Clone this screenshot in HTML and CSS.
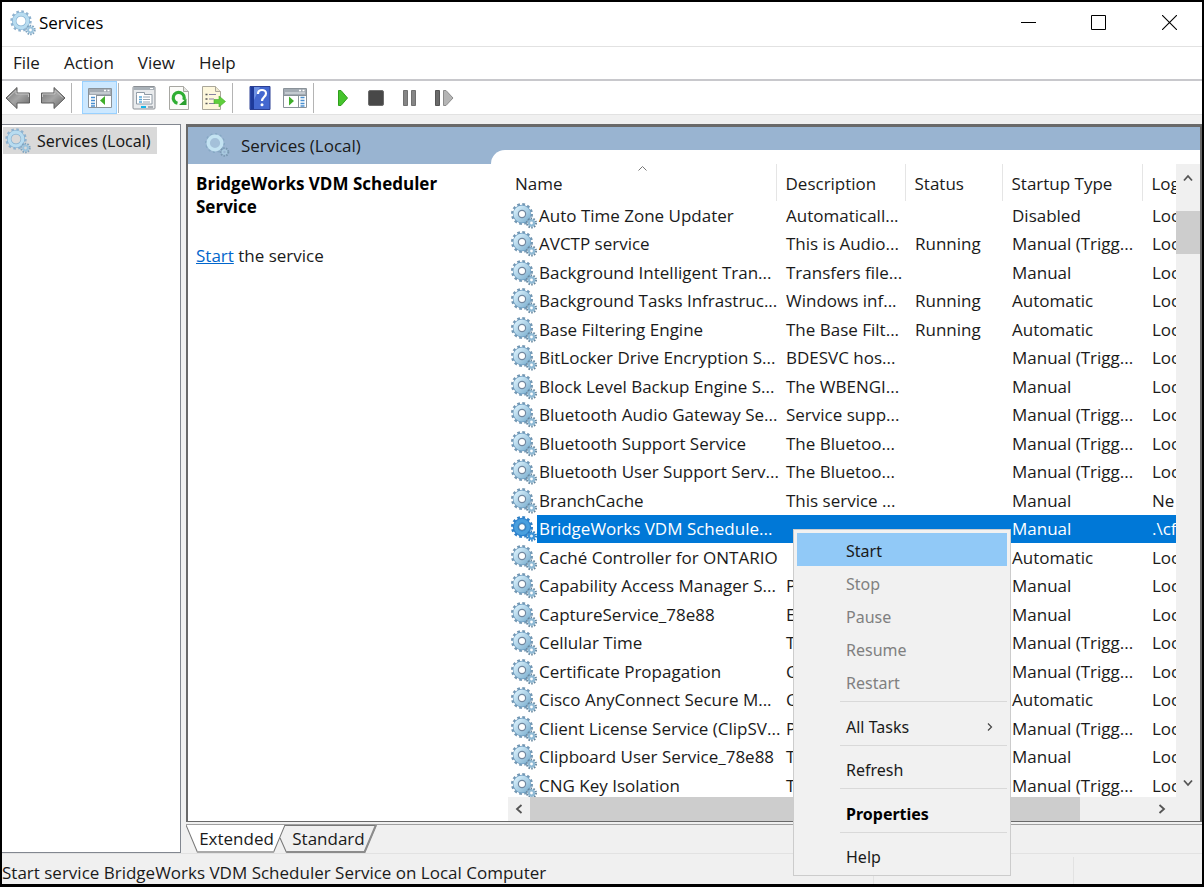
FILE: index.html
```html
<!DOCTYPE html>
<html lang="en">
<head>
    <meta charset="UTF-8">
    <meta name="viewport" content="width=device-width, initial-scale=1.0">
    <title>Services</title>
    <link rel="stylesheet" href="styles.css">
</head>
<body>
    <!-- Shared icons -->
    <svg class="sprite" aria-hidden="true">
        <defs>
            <linearGradient id="steel" x1="0" y1="0" x2="1" y2="1">
                <stop offset="0" stop-color="#d6eefa"/>
                <stop offset="1" stop-color="#86b6d4"/>
            </linearGradient>
            <linearGradient id="grey" x1="0" y1="0" x2="1" y2="1">
                <stop offset="0" stop-color="#707070"/>
                <stop offset="0.5" stop-color="#a5a5a5"/>
                <stop offset="1" stop-color="#666"/>
            </linearGradient>
        </defs>
        <symbol id="gear" viewBox="0 0 26 26">
            <circle cx="11" cy="11" r="9.3" fill="none" stroke="#7397b3" stroke-width="3.4" stroke-dasharray="2.6 2.27"/>
            <circle cx="11" cy="11" r="6.2" fill="none" stroke="#6d9cc0" stroke-width="6"/>
            <circle cx="11" cy="11" r="6.2" fill="none" stroke="url(#steel)" stroke-width="4.8"/>
            <circle cx="11" cy="11" r="3.6" fill="#fff" stroke="#7288a0" stroke-width="1.2"/>
            <circle cx="20.5" cy="20" r="4.4" fill="none" stroke="#65869e" stroke-width="2.2" stroke-dasharray="1.5 1.26"/>
            <circle cx="20.5" cy="20" r="2.6" fill="#fff" stroke="#8fb9d4" stroke-width="2.4"/>
        </symbol>
        <symbol id="gear-soft" viewBox="0 0 26 26">
            <circle cx="11" cy="11" r="9.3" fill="none" stroke="#8fb2cf" stroke-width="2.8" stroke-dasharray="2.5 2.37"/>
            <circle cx="11" cy="11" r="6.8" fill="none" stroke="#7fadd0" stroke-width="4.4"/>
            <circle cx="11" cy="11" r="6.8" fill="none" stroke="#b8dcf0" stroke-width="3.2"/>
            <circle cx="20.5" cy="20" r="4.2" fill="none" stroke="#7ea3bf" stroke-width="2" stroke-dasharray="1.5 1.14"/>
            <circle cx="20.5" cy="20" r="2.4" fill="none" stroke="#9cc4dd" stroke-width="2"/>
        </symbol>
        <symbol id="gear-banner" viewBox="0 0 26 26">
            <circle cx="10" cy="10" r="9" fill="none" stroke="#86a8c4" stroke-width="2" stroke-dasharray="2 2.7"/>
            <circle cx="10" cy="10" r="6.8" fill="#a4c0d9" stroke="#c3e3f2" stroke-width="3.4"/>
            <circle cx="19.5" cy="19" r="3.8" fill="none" stroke="#7898b0" stroke-width="2" stroke-dasharray="1.4 1.3"/>
            <circle cx="19.5" cy="19" r="2" fill="none" stroke="#a8cadf" stroke-width="1.6"/>
        </symbol>
        <symbol id="gear-selected" viewBox="0 0 26 26">
            <circle cx="11" cy="11" r="9.3" fill="none" stroke="#2f7fc4" stroke-width="3.4" stroke-dasharray="2.6 2.27"/>
            <circle cx="11" cy="11" r="6.2" fill="none" stroke="#2c82cf" stroke-width="6"/>
            <circle cx="11" cy="11" r="6.2" fill="none" stroke="#4a9fdd" stroke-width="3.6"/>
            <circle cx="11" cy="11" r="3.4" fill="#fff" stroke="#2a6ea8" stroke-width="1"/>
            <circle cx="20.5" cy="20" r="4.4" fill="none" stroke="#2a78ba" stroke-width="2.2" stroke-dasharray="1.5 1.26"/>
            <circle cx="20.5" cy="20" r="2.6" fill="#e4f2fc" stroke="#3b93d8" stroke-width="2.2"/>
        </symbol>
    </svg>

    <div class="window">
        <header class="title-bar">
            <svg class="gear"><use href="#gear-soft"/></svg>
            <h1>Services</h1>
            <div class="window-buttons">
                <button type="button" aria-label="Minimize"><svg width="15" height="15" viewBox="0 0 15 15"><path d="M0 7.5h15" stroke="#000"/></svg></button>
                <button type="button" aria-label="Maximize"><svg width="15" height="15" viewBox="0 0 15 15"><path d="M.5.5h14v14h-14z" fill="none" stroke="#000"/></svg></button>
                <button type="button" aria-label="Close"><svg width="15" height="15" viewBox="0 0 15 15"><path d="M0 0l15 15M15 0L0 15" stroke="#000" stroke-width="1.1"/></svg></button>
            </div>
        </header>

        <nav class="menu-bar">
            <button type="button">File</button>
            <button type="button">Action</button>
            <button type="button">View</button>
            <button type="button">Help</button>
        </nav>

        <div class="toolbar">
            <button type="button" aria-label="Back">
                <svg width="26" height="24" viewBox="0 0 26 24"><path d="M1 12L12 1.5V7h12.500v10H12v5.500z" fill="url(#grey)" stroke="#5c5c5c"/><path d="M3 12l8-7.500V8h12.500v3" fill="none" stroke="#c4c4c4"/></svg>
            </button>
            <button type="button" aria-label="Forward">
                <svg width="26" height="24" viewBox="0 0 26 24"><path d="M25 12L14 1.500V7H1.500v10H14v5.500z" fill="url(#grey)" stroke="#5c5c5c"/><path d="M2.500 11V8H15V4.500l7.500 7" fill="none" stroke="#c4c4c4"/></svg>
            </button>
            <span class="divider"></span>
            <button type="button" class="active" aria-label="Show or hide console tree">
                <svg width="24" height="20" viewBox="0 0 24 20"><path d="M.5.5h23v19H.5z" fill="#fff" stroke="#8a9299"/><path d="M1 1h22v6H1z" fill="#a3abb3"/><path d="M2 5h20" stroke="#e6eaee"/><path d="M16 2.500h2M19.500 2.500h2" stroke="#fff" stroke-width="1.500"/><path d="M8.500 7v12" stroke="#8a9299"/><path d="M3 9.500h4M3 12.500h4M3 15.500h4M3 18h4" stroke="#4a8fd0" stroke-width="1.400"/><path d="M17 8v9l-5-4.500z" fill="#3fae2a"/><path d="M9 7.500h14" stroke="#8a9299"/></svg>
            </button>
            <span class="divider"></span>
            <button type="button" aria-label="Properties">
                <svg width="24" height="24" viewBox="0 0 24 24"><rect x="1" y=".5" width="22" height="22.500" rx="1" fill="#e9ebed" stroke="#8b8f94"/><path d="M1.500 1h21v3h-21z" fill="#a9b1b8"/><path d="M18 2.500h3" stroke="#fff"/><path d="M4.500 8.500V6.500h8v2h7.500v9.500h-15.500z" fill="#fff" stroke="#8f9aa5"/><path d="M7 11h3M7 13.500h3M7 16h3" stroke="#58a6d8" stroke-width="1.500"/><path d="M11 11h7M11 13.500h7M11 16h7" stroke="#9aa6b2" stroke-width="1.200"/><path d="M9 21h5" stroke="#16b4e8" stroke-width="2"/><path d="M16 21h5" stroke="#a8adb2" stroke-width="2"/></svg>
            </button>
            <button type="button" aria-label="Refresh">
                <svg width="20" height="24" viewBox="0 0 20 24"><path d="M.5.5h14l5 5v18H.5z" fill="#fbfbf8" stroke="#a7a7a2"/><path d="M14.500.5v5h5" fill="#e4e4e0" stroke="#a7a7a2"/><path d="M8.500 17.200A5.500 5.500 0 1 1 14.800 14" fill="none" stroke="#2fae32" stroke-width="3.200"/><path d="M17.500 12.500v6.500H10z" fill="#2a9f2d"/></svg>
            </button>
            <button type="button" aria-label="Export list">
                <svg width="24" height="24" viewBox="0 0 24 24"><path d="M.5.5h13l5 5v18H.5z" fill="#fdf7dc" stroke="#aaa79a"/><path d="M13.500.5v5h5" fill="#eee8cf" stroke="#aaa79a"/><path d="M3.500 8.500h2M3.500 13h2M3.500 17.500h2" stroke="#555" stroke-width="1.500"/><path d="M7 8.500h7M7 13h5M7 17.500h6" stroke="#8782a0" stroke-width="1.200"/><path d="M12 13.500h5V10l6.500 5.500L17 21v-3.500h-5z" fill="#5fcf3c" stroke="#46ab2a" stroke-width=".6"/></svg>
            </button>
            <span class="divider"></span>
            <button type="button" class="help-button" aria-label="Help">
                <svg width="22" height="24" viewBox="0 0 22 24"><path d="M1 .5h20v23H1z" fill="#4468d0" stroke="#2b3f93"/><path d="M1.500 1h3.500v22H1.500z" fill="#1e3a9a"/><path d="M5 1h6L5 14z" fill="#6f92e4"/><path d="M9 8c0-5.500 8-5 8-.5 0 3.500-4 3.500-4 7.500" fill="none" stroke="#fff" stroke-width="2.200"/><circle cx="13" cy="18.800" r="1.500" fill="#fff"/></svg>
            </button>
            <button type="button" aria-label="Show or hide action pane">
                <svg width="24" height="20" viewBox="0 0 24 20"><path d="M.5.5h23v19H.5z" fill="#fff" stroke="#8a9299"/><path d="M1 1h22v6H1z" fill="#a3abb3"/><path d="M2 5h20" stroke="#e6eaee"/><path d="M16 2.500h2M19.500 2.500h2" stroke="#fff" stroke-width="1.500"/><path d="M15.500 7v12" stroke="#8a9299"/><path d="M17.500 9.500h4M17.500 12.500h4M17.500 15.500h4M17.500 18h4" stroke="#4a8fd0" stroke-width="1.400"/><path d="M6 8.500v9l5-4.500z" fill="#3fae2a"/><path d="M1 7.500h22" stroke="#8a9299"/></svg>
            </button>
            <span class="divider"></span>
            <div class="service-controls">
                <button type="button" aria-label="Start service"><svg width="12" height="16" viewBox="0 0 12 16"><path d="M1.500.5H4L10.500 8 4 15.500H1.500z" fill="#45c42c" stroke="#2f9e1c"/></svg></button>
                <button type="button" aria-label="Stop service"><svg width="16" height="16" viewBox="0 0 16 16"><rect x=".5" y=".5" width="15" height="15" rx="1.500" fill="#484848" stroke="#6d6d6d"/></svg></button>
                <button type="button" aria-label="Pause service"><svg width="13" height="16" viewBox="0 0 13 16"><path d="M.5.5h4v15h-4zM8.500.5h4v15h-4z" fill="#858585" stroke="#707070"/></svg></button>
                <button type="button" aria-label="Restart service"><svg width="19" height="16" viewBox="0 0 19 16"><path d="M.5.5h4v15h-4z" fill="#6a6a6a" stroke="#555"/><path d="M8.500.5h2.500l7 7.500-7 7.500H8.500z" fill="#b5b5b5" stroke="#8c8c8c"/></svg></button>
            </div>
        </div>

        <main class="workspace">
            <aside class="tree">
                <a href="#" class="tree-item"><svg class="gear"><use href="#gear-soft"/></svg><span>Services (Local)</span></a>
            </aside>

            <div class="detail">
                <section class="pane">
                    <div class="banner">
                        <div class="banner-title"><svg class="gear"><use href="#gear-banner"/></svg><h2>Services (Local)</h2></div>
                        <div class="banner-notch"></div>
                    </div>

                    <div class="pane-body">
                        <div class="description">
                            <h3>BridgeWorks VDM Scheduler Service</h3>
                            <p><a href="#">Start</a> the service</p>
                        </div>

                        <div class="list">
                            <div class="list-view">
                                <table>
                                    <colgroup>
                                        <col class="col-name">
                                        <col class="col-description">
                                        <col class="col-status">
                                        <col class="col-startup">
                                        <col class="col-logon">
                                    </colgroup>
                                    <thead>
                                        <tr>
                                            <th>Name<svg class="sort" width="9" height="5" viewBox="0 0 9 5"><path d="M.5 4.500l4-4 4 4" fill="none" stroke="#777"/></svg></th>
                                            <th>Description</th>
                                            <th>Status</th>
                                            <th>Startup Type</th>
                                            <th>Log</th>
                                        </tr>
                                    </thead>
                                    <tbody>
                                        <tr><td><svg class="gear"><use href="#gear"/></svg>Auto Time Zone Updater</td><td>Automaticall...</td><td></td><td>Disabled</td><td>Loc</td></tr>
                                        <tr><td><svg class="gear"><use href="#gear"/></svg>AVCTP service</td><td>This is Audio...</td><td>Running</td><td>Manual (Trigg...</td><td>Loc</td></tr>
                                        <tr><td><svg class="gear"><use href="#gear"/></svg>Background Intelligent Tran...</td><td>Transfers file...</td><td></td><td>Manual</td><td>Loc</td></tr>
                                        <tr><td><svg class="gear"><use href="#gear"/></svg>Background Tasks Infrastruc...</td><td>Windows inf...</td><td>Running</td><td>Automatic</td><td>Loc</td></tr>
                                        <tr><td><svg class="gear"><use href="#gear"/></svg>Base Filtering Engine</td><td>The Base Filt...</td><td>Running</td><td>Automatic</td><td>Loc</td></tr>
                                        <tr><td><svg class="gear"><use href="#gear"/></svg>BitLocker Drive Encryption S...</td><td>BDESVC hos...</td><td></td><td>Manual (Trigg...</td><td>Loc</td></tr>
                                        <tr><td><svg class="gear"><use href="#gear"/></svg>Block Level Backup Engine S...</td><td>The WBENGI...</td><td></td><td>Manual</td><td>Loc</td></tr>
                                        <tr><td><svg class="gear"><use href="#gear"/></svg>Bluetooth Audio Gateway Se...</td><td>Service supp...</td><td></td><td>Manual (Trigg...</td><td>Loc</td></tr>
                                        <tr><td><svg class="gear"><use href="#gear"/></svg>Bluetooth Support Service</td><td>The Bluetoo...</td><td></td><td>Manual (Trigg...</td><td>Loc</td></tr>
                                        <tr><td><svg class="gear"><use href="#gear"/></svg>Bluetooth User Support Serv...</td><td>The Bluetoo...</td><td></td><td>Manual (Trigg...</td><td>Loc</td></tr>
                                        <tr><td><svg class="gear"><use href="#gear"/></svg>BranchCache</td><td>This service ...</td><td></td><td>Manual</td><td>Ne</td></tr>
                                        <tr class="selected"><td><svg class="gear"><use href="#gear-selected"/></svg>BridgeWorks VDM Schedule...</td><td></td><td></td><td>Manual</td><td>.\cf</td></tr>
                                        <tr><td><svg class="gear"><use href="#gear"/></svg>Caché Controller for ONTARIO</td><td></td><td></td><td>Automatic</td><td>Loc</td></tr>
                                        <tr><td><svg class="gear"><use href="#gear"/></svg>Capability Access Manager S...</td><td>P</td><td></td><td>Manual</td><td>Loc</td></tr>
                                        <tr><td><svg class="gear"><use href="#gear"/></svg>CaptureService_78e88</td><td>E</td><td></td><td>Manual</td><td>Loc</td></tr>
                                        <tr><td><svg class="gear"><use href="#gear"/></svg>Cellular Time</td><td>T</td><td></td><td>Manual (Trigg...</td><td>Loc</td></tr>
                                        <tr><td><svg class="gear"><use href="#gear"/></svg>Certificate Propagation</td><td>C</td><td></td><td>Manual (Trigg...</td><td>Loc</td></tr>
                                        <tr><td><svg class="gear"><use href="#gear"/></svg>Cisco AnyConnect Secure M...</td><td>C</td><td></td><td>Automatic</td><td>Loc</td></tr>
                                        <tr><td><svg class="gear"><use href="#gear"/></svg>Client License Service (ClipSV...</td><td>P</td><td></td><td>Manual (Trigg...</td><td>Loc</td></tr>
                                        <tr><td><svg class="gear"><use href="#gear"/></svg>Clipboard User Service_78e88</td><td>T</td><td></td><td>Manual</td><td>Loc</td></tr>
                                        <tr><td><svg class="gear"><use href="#gear"/></svg>CNG Key Isolation</td><td>T</td><td></td><td>Manual (Trigg...</td><td>Loc</td></tr>
                                    </tbody>
                                </table>
                            </div>
                            <div class="scroll-v">
                                <button type="button" aria-label="Scroll up"><svg width="10" height="8" viewBox="0 0 10 8"><path d="M1 6.500l4-4.500 4 4.500" fill="none" stroke="#555" stroke-width="1.800"/></svg></button>
                                <div class="thumb"></div>
                                <button type="button" aria-label="Scroll down"><svg width="10" height="8" viewBox="0 0 10 8"><path d="M1 1.500L5 6l4-4.500" fill="none" stroke="#555" stroke-width="1.800"/></svg></button>
                            </div>
                            <div class="scroll-h">
                                <button type="button" aria-label="Scroll left"><svg width="8" height="10" viewBox="0 0 8 10"><path d="M6.500 1L2 5l4.500 4" fill="none" stroke="#555" stroke-width="1.800"/></svg></button>
                                <div class="track"><div class="thumb"></div></div>
                                <button type="button" aria-label="Scroll right"><svg width="8" height="10" viewBox="0 0 8 10"><path d="M1.500 1L6 5 1.500 9" fill="none" stroke="#555" stroke-width="1.800"/></svg></button>
                            </div>
                        </div>
                    </div>
                </section>

                <div class="tabs">
                    <button type="button" class="tab tab-active">
                        <svg viewBox="0 0 96 28" preserveAspectRatio="none"><path d="M0 0l11 27h74l11-27" fill="#fff" stroke="#777"/><path d="M11 27h74" stroke="#aaa" stroke-width="2"/></svg>
                        <span>Extended</span>
                    </button>
                    <button type="button" class="tab">
                        <svg viewBox="0 0 96 28" preserveAspectRatio="none"><path d="M2 .5h93L84 27H8L2 13" fill="#f0f0f0" stroke="#777"/><path d="M8 27h76L95 0" fill="none" stroke="#8c8c8c" stroke-width="2"/></svg>
                        <span>Standard</span>
                    </button>
                </div>
            </div>
        </main>

        <footer class="status-bar">
            <span class="status-text">Start service BridgeWorks VDM Scheduler Service on Local Computer</span>
            <span class="status-cell"></span>
            <span class="status-cell"></span>
        </footer>
    </div>

    <div class="context-menu" role="menu">
        <button type="button" role="menuitem" class="highlighted">Start</button>
        <button type="button" role="menuitem" disabled>Stop</button>
        <button type="button" role="menuitem" disabled>Pause</button>
        <button type="button" role="menuitem" disabled>Resume</button>
        <button type="button" role="menuitem" disabled>Restart</button>
        <hr>
        <button type="button" role="menuitem">All Tasks<svg width="6" height="8" viewBox="0 0 6 8"><path d="M1 .5L4.500 4 1 7.500" fill="none" stroke="#444" stroke-width="1.200"/></svg></button>
        <hr>
        <button type="button" role="menuitem">Refresh</button>
        <hr>
        <button type="button" role="menuitem" class="default">Properties</button>
        <hr>
        <button type="button" role="menuitem">Help</button>
    </div>
</body>
</html>
```
FILE: styles.css
```css
:root {
    --face: #f0f0f0;
    --text: #1a1a1a;
    --line: #e2e2e2;
    --caption: #99b4d1;
    --accent: #0078d7;
    --thumb: #cdcdcd;
    --hover: #91c9f7;
}

* {
    box-sizing: border-box;
}

body {
    margin: 0;
    font-family: "Open Sans", "Noto Sans", sans-serif;
    font-size: 17px;
    line-height: 24px;
    color: var(--text);
}

h1, h2, h3, p {
    margin: 0;
    font-size: inherit;
    font-weight: normal;
}

button {
    display: flex;
    align-items: center;
    justify-content: center;
    padding: 0;
    border: 0;
    background: none;
    font: inherit;
    color: inherit;
}

svg {
    display: block;
    flex: none;
}

.sprite {
    position: absolute;
    width: 0;
    height: 0;
}

.gear {
    width: 26px;
    height: 26px;
}

.window {
    display: flex;
    flex-direction: column;
    height: 100vh;
    border: 2px solid #000;
    border-bottom-width: 3px;
    background: var(--face);
}

/* Title bar */
.title-bar {
    display: flex;
    align-items: center;
    gap: 3px;
    height: 45px;
    padding: 0 0 2px 8px;
    border-bottom: 1px solid var(--line);
    background: #fff;
    color: #000;
}

.window-buttons {
    display: flex;
    margin-left: auto;
}

.window-buttons button {
    width: 70px;
    height: 42px;
    padding-bottom: 2px;
}

.window-buttons button:last-child {
    width: 66px;
    margin-left: 3px;
}

/* Menu bar */
.menu-bar {
    display: flex;
    gap: 24px;
    height: 34px;
    padding-left: 11px;
    border-bottom: 2px solid #c8c8cc;
    background: #fff;
}

/* Toolbar */
.toolbar {
    display: flex;
    align-items: center;
    height: 34px;
    padding-left: 3px;
    border-bottom: 1px solid var(--line);
    background: #fff;
}

.toolbar button {
    width: 35px;
    height: 33px;
}

.toolbar button:first-child {
    width: 26px;
    margin-right: 4px;
}

.toolbar .active {
    margin-left: 9px;
    background: #cce8ff;
    border: 1px solid #99d1ff;
}

.toolbar .active + .divider {
    margin: 0 7px 0 1px;
}

.toolbar .help-button {
    margin-left: 8px;
}

.divider {
    width: 1px;
    height: 30px;
    margin: 0 1px;
    background: #b4b4b4;
}

.service-controls {
    display: flex;
    gap: 19px;
    padding-left: 22px;
}

.toolbar .service-controls button {
    width: auto;
    margin: 0;
}

/* Workspace */
.workspace {
    display: flex;
    flex: 1;
    gap: 5px;
    min-height: 0;
    padding-top: 9px;
}

.tree {
    width: 179px;
    border: 1px solid #828790;
    border-width: 1px 1px 1px 0;
    background: #fff;
    font-family: "Noto Sans", sans-serif;
    font-size: 16px;
}

.tree-item {
    display: flex;
    align-items: center;
    gap: 6px;
    width: 154px;
    height: 27px;
    margin: 2px 0 0 1px;
    padding-left: 2px;
    background: #d9d9d9;
    color: inherit;
    text-decoration: none;
    white-space: nowrap;
}

.detail {
    display: flex;
    flex: 1;
    flex-direction: column;
    min-width: 0;
}

.pane {
    display: flex;
    flex: 1;
    flex-direction: column;
    min-height: 0;
    border: 2px solid #696969;
    border-bottom-width: 1px;
    border-top-width: 3px;
    background: #fff;
}

.banner {
    display: flex;
    align-items: flex-end;
    height: 37px;
    background: var(--caption);
}

.banner-title {
    display: flex;
    align-items: center;
    gap: 10px;
    width: 303px;
    height: 37px;
    padding-left: 17px;
}

.banner-notch {
    flex: 1;
    height: 14px;
    border-top-left-radius: 14px;
    background: #fff;
}

.pane-body {
    display: flex;
    flex: 1;
    min-height: 0;
}

.description {
    width: 318px;
    padding: 8px 40px 0 8px;
    line-height: 23px;
}

.description h3 {
    font-weight: bold;
    color: #000;
}

.description p {
    margin-top: 26px;
}

.description a {
    color: #0066cc;
}

/* Service list */
.list {
    display: grid;
    flex: 1;
    grid-template-columns: minmax(0, 1fr) 24px;
    grid-template-rows: minmax(0, 1fr) 24px;
    min-width: 0;
}

.list-view {
    overflow: hidden;
}

table {
    width: 100%;
    table-layout: fixed;
    border-collapse: collapse;
}

.col-name {
    width: 270px;
}

.col-description {
    width: 129px;
}

.col-status {
    width: 97px;
}

.col-startup {
    width: 140px;
}

th,
td {
    height: 28px;
    padding: 0 0 0 10px;
    text-align: left;
    white-space: nowrap;
}

th {
    height: 37px;
    padding: 3px 0 0 9px;
    border-right: 1px solid #e5e5e5;
    font-weight: normal;
}

th:last-child {
    border-right: 0;
}

th:first-child {
    position: relative;
}

tbody tr:nth-child(odd) td {
    height: 29px;
}

td:first-child {
    display: flex;
    align-items: center;
    gap: 2px;
    padding-left: 5px;
}

.sort {
    position: absolute;
    top: 2px;
    left: 49%;
}

.selected {
    color: #fff;
}

.selected td {
    background: var(--accent);
}

.selected td:first-child {
    background: linear-gradient(to right, #fff 31px, var(--accent) 31px);
}

/* Scroll bars */
.scroll-v {
    display: flex;
    flex-direction: column;
    grid-row: span 2;
    background: var(--face);
}

.scroll-v button {
    height: 28px;
}

.scroll-v .thumb {
    height: 43px;
    margin-top: 19px;
}

.scroll-v button:last-child {
    margin: auto 0 24px;
}

.scroll-h {
    display: flex;
    padding-left: 2px;
    background: linear-gradient(to right, #fff 2px, var(--face) 2px);
}

.scroll-h button {
    width: 22px;
}

.scroll-h button:last-child {
    width: 28px;
}

.track {
    flex: 1;
}

.track .thumb {
    width: 89%;
    height: 100%;
}

.thumb {
    background: var(--thumb);
}

/* Bottom tabs */
.tabs {
    display: flex;
    height: 29px;
    margin-top: 2px;
    border-top: 1px solid #a0a0a0;
}

.tab {
    position: relative;
    width: 99px;
    height: 28px;
    padding-left: 2px;
}

.tab svg {
    position: absolute;
    inset: 0;
    width: 100%;
    height: 100%;
}

.tab span {
    position: relative;
}

.tab-active {
    z-index: 1;
}

.tab + .tab {
    margin-left: -7px;
}

/* Status bar */
.status-bar {
    display: flex;
    height: 31px;
    border-top: 1px solid var(--line);
    line-height: 38px;
}

.status-text {
    flex: 1;
    white-space: nowrap;
}

.status-cell {
    width: 200px;
    margin-top: 3px;
    border-left: 1px solid var(--line);
}

.status-cell:last-child {
    width: 129px;
}

/* Context menu */
.context-menu {
    position: absolute;
    top: 529px;
    left: 793px;
    width: 218px;
    padding: 3px;
    border: 1px solid #ccc;
    background: #f1f1f1;
    font-family: "Noto Sans", sans-serif;
    font-size: 16px;
}

.context-menu button {
    justify-content: space-between;
    width: 100%;
    height: 33px;
    padding: 2px 14px 0 49px;
}

.context-menu .highlighted {
    background: var(--hover);
}

.context-menu button:disabled {
    color: #808080;
}

.context-menu .default {
    font-weight: bold;
    color: #000;
}

.context-menu hr {
    height: 1px;
    margin: 3px 0 6px 43px;
    border: 0;
    background: #d9d9d9;
}

.context-menu hr:nth-of-type(odd) {
    margin-bottom: 7px;
}
```
